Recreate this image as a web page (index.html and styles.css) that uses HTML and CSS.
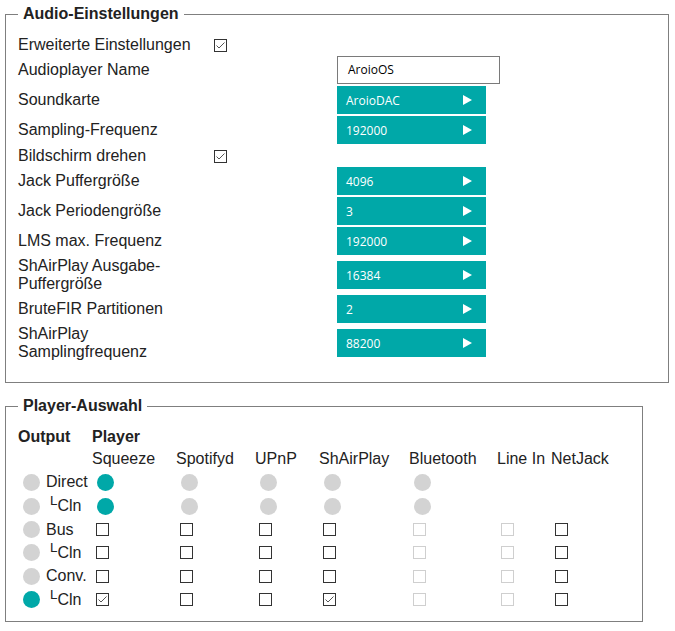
FILE: index.html
```html
<!DOCTYPE html>
<html lang="de">
<head>
    <meta charset="UTF-8">
    <title>Audio-Einstellungen</title>
    <link rel="stylesheet" href="styles.css">
</head>
<body>

<fieldset class="panel panel-audio">
    <legend>Audio-Einstellungen</legend>
    <div class="settings">
        <div class="label">Erweiterte Einstellungen</div>
        <span class="check checked cell-check"><svg viewBox="0 0 11 11"><polyline points="1.5,5.5 4,8 9.5,2.5"/></svg></span>

        <div class="label">Audioplayer Name</div>
        <div class="text-input cell-value">AroioOS</div>

        <div class="label">Soundkarte</div>
        <div class="picker cell-value"><span>AroioDAC</span><i class="arrow"></i></div>

        <div class="label">Sampling-Frequenz</div>
        <div class="picker cell-value"><span>192000</span><i class="arrow"></i></div>

        <div class="label">Bildschirm drehen</div>
        <span class="check checked cell-check"><svg viewBox="0 0 11 11"><polyline points="1.5,5.5 4,8 9.5,2.5"/></svg></span>

        <div class="label">Jack Puffergröße</div>
        <div class="picker cell-value"><span>4096</span><i class="arrow"></i></div>

        <div class="label">Jack Periodengröße</div>
        <div class="picker cell-value"><span>3</span><i class="arrow"></i></div>

        <div class="label">LMS max. Frequenz</div>
        <div class="picker cell-value"><span>192000</span><i class="arrow"></i></div>

        <div class="label">ShAirPlay Ausgabe-Puffergröße</div>
        <div class="picker cell-value"><span>16384</span><i class="arrow"></i></div>

        <div class="label">BruteFIR Partitionen</div>
        <div class="picker cell-value"><span>2</span><i class="arrow"></i></div>

        <div class="label">ShAirPlay Samplingfrequenz</div>
        <div class="picker cell-value"><span>88200</span><i class="arrow"></i></div>
    </div>
</fieldset>

<fieldset class="panel panel-player">
    <legend>Player-Auswahl</legend>
    <div class="players">
        <div class="head">Output</div>
        <div class="head head-player">Player</div>

        <div></div>
        <div>Squeeze</div>
        <div>Spotifyd</div>
        <div>UPnP</div>
        <div>ShAirPlay</div>
        <div>Bluetooth</div>
        <div>Line In</div>
        <div>NetJack</div>

        <!-- Direct -->
        <div class="out"><span class="dot"></span><span class="out-name">Direct</span></div>
        <div><span class="dot on"></span></div>
        <div><span class="dot"></span></div>
        <div><span class="dot"></span></div>
        <div><span class="dot"></span></div>
        <div><span class="dot"></span></div>
        <div></div>
        <div></div>

        <!-- Direct clone -->
        <div class="out"><span class="dot"></span><span class="out-name clone"><sup>L</sup>Cln</span></div>
        <div><span class="dot on"></span></div>
        <div><span class="dot"></span></div>
        <div><span class="dot"></span></div>
        <div><span class="dot"></span></div>
        <div><span class="dot"></span></div>
        <div></div>
        <div></div>

        <!-- Bus -->
        <div class="out"><span class="dot"></span><span class="out-name">Bus</span></div>
        <div><span class="check"></span></div>
        <div><span class="check"></span></div>
        <div><span class="check"></span></div>
        <div><span class="check"></span></div>
        <div><span class="check disabled"></span></div>
        <div><span class="check disabled"></span></div>
        <div><span class="check"></span></div>

        <!-- Bus clone -->
        <div class="out"><span class="dot"></span><span class="out-name clone"><sup>L</sup>Cln</span></div>
        <div><span class="check"></span></div>
        <div><span class="check"></span></div>
        <div><span class="check"></span></div>
        <div><span class="check"></span></div>
        <div><span class="check disabled"></span></div>
        <div><span class="check disabled"></span></div>
        <div><span class="check"></span></div>

        <!-- Conv. -->
        <div class="out"><span class="dot"></span><span class="out-name">Conv.</span></div>
        <div><span class="check"></span></div>
        <div><span class="check"></span></div>
        <div><span class="check"></span></div>
        <div><span class="check"></span></div>
        <div><span class="check disabled"></span></div>
        <div><span class="check disabled"></span></div>
        <div><span class="check"></span></div>

        <!-- Conv. clone -->
        <div class="out"><span class="dot on"></span><span class="out-name clone"><sup>L</sup>Cln</span></div>
        <div><span class="check checked"><svg viewBox="0 0 11 11"><polyline points="1.5,5.5 4,8 9.5,2.5"/></svg></span></div>
        <div><span class="check"></span></div>
        <div><span class="check"></span></div>
        <div><span class="check checked"><svg viewBox="0 0 11 11"><polyline points="1.5,5.5 4,8 9.5,2.5"/></svg></span></div>
        <div><span class="check disabled"></span></div>
        <div><span class="check disabled"></span></div>
        <div><span class="check"></span></div>
    </div>
</fieldset>

</body>
</html>
```

FILE: styles.css
```css
* {
    box-sizing: border-box;
}

body {
    margin: 0;
    font: 16px "Liberation Sans", Arial, sans-serif;
    color: #222;
    background: #fff;
}

.panel {
    margin: 5px 0 0 5px;
    padding: 12px 12px 21px 12px;
    border: 1px solid #7f7f7f;
    min-width: 0;
}

.panel legend {
    padding: 0 5px;
    font-weight: bold;
    line-height: normal;
}

.panel-audio {
    width: 664px;
}

.panel-player {
    width: 638px;
    margin-top: 14px;
    padding-top: 11px;
    padding-bottom: 10px;
}

/* Audio-Einstellungen */
.settings {
    display: grid;
    grid-template-columns: 192px 127px 1fr;
    row-gap: 2px;
    align-items: center;
}

.label {
    grid-column: 1;
}

.cell-check {
    grid-column: 2;
    margin: 4px 0 2px 4px;
}

.cell-value {
    grid-column: 3;
}

.text-input {
    width: 163px;
    height: 28px;
    border: 1px solid #7a7a7a;
    padding-left: 10px;
    font: 12px "Open Sans", sans-serif;
    line-height: 26px;
    color: #000;
}

.picker {
    display: flex;
    align-items: center;
    justify-content: space-between;
    width: 149px;
    height: 28px;
    padding: 0 14px 0 9px;
    background-color: #00a8a8;
    color: white;
    font: 12px "Open Sans", sans-serif;
}

.picker .arrow {
    width: 0;
    height: 0;
    border-left: 9px solid white;
    border-top: 5px solid transparent;
    border-bottom: 5px solid transparent;
}

/* Checkboxen */
.check {
    display: block;
    width: 13px;
    height: 13px;
    border: 1px solid #333;
    background: white;
}

.check svg {
    display: block;
    width: 11px;
    height: 11px;
    fill: none;
    stroke: #555;
    stroke-width: 1;
}

.check.disabled {
    border-color: #cfcfcf;
}

/* Player-Auswahl */
.players {
    display: grid;
    grid-template-columns: 74px 84px 79px 64px 90px 88px 54px auto;
    grid-template-rows: 22px 22px 24px 24px 23px 23px 24px 23px;
    align-items: center;
}

.players .check {
    margin-left: 4px;
}

.head {
    font-weight: bold;
}

.head-player {
    grid-column: 2 / -1;
}

.out {
    display: flex;
    align-items: center;
}

.dot {
    display: block;
    width: 17px;
    height: 17px;
    margin-left: 5px;
    border-radius: 50%;
    background-color: #d3d3d3;
}

.dot.on {
    background-color: #00a8a8;
}

.out-name {
    margin-left: 6px;
}

.out-name.clone {
    margin-left: 10px;
}

.out-name sup {
    line-height: 0;
}
```
